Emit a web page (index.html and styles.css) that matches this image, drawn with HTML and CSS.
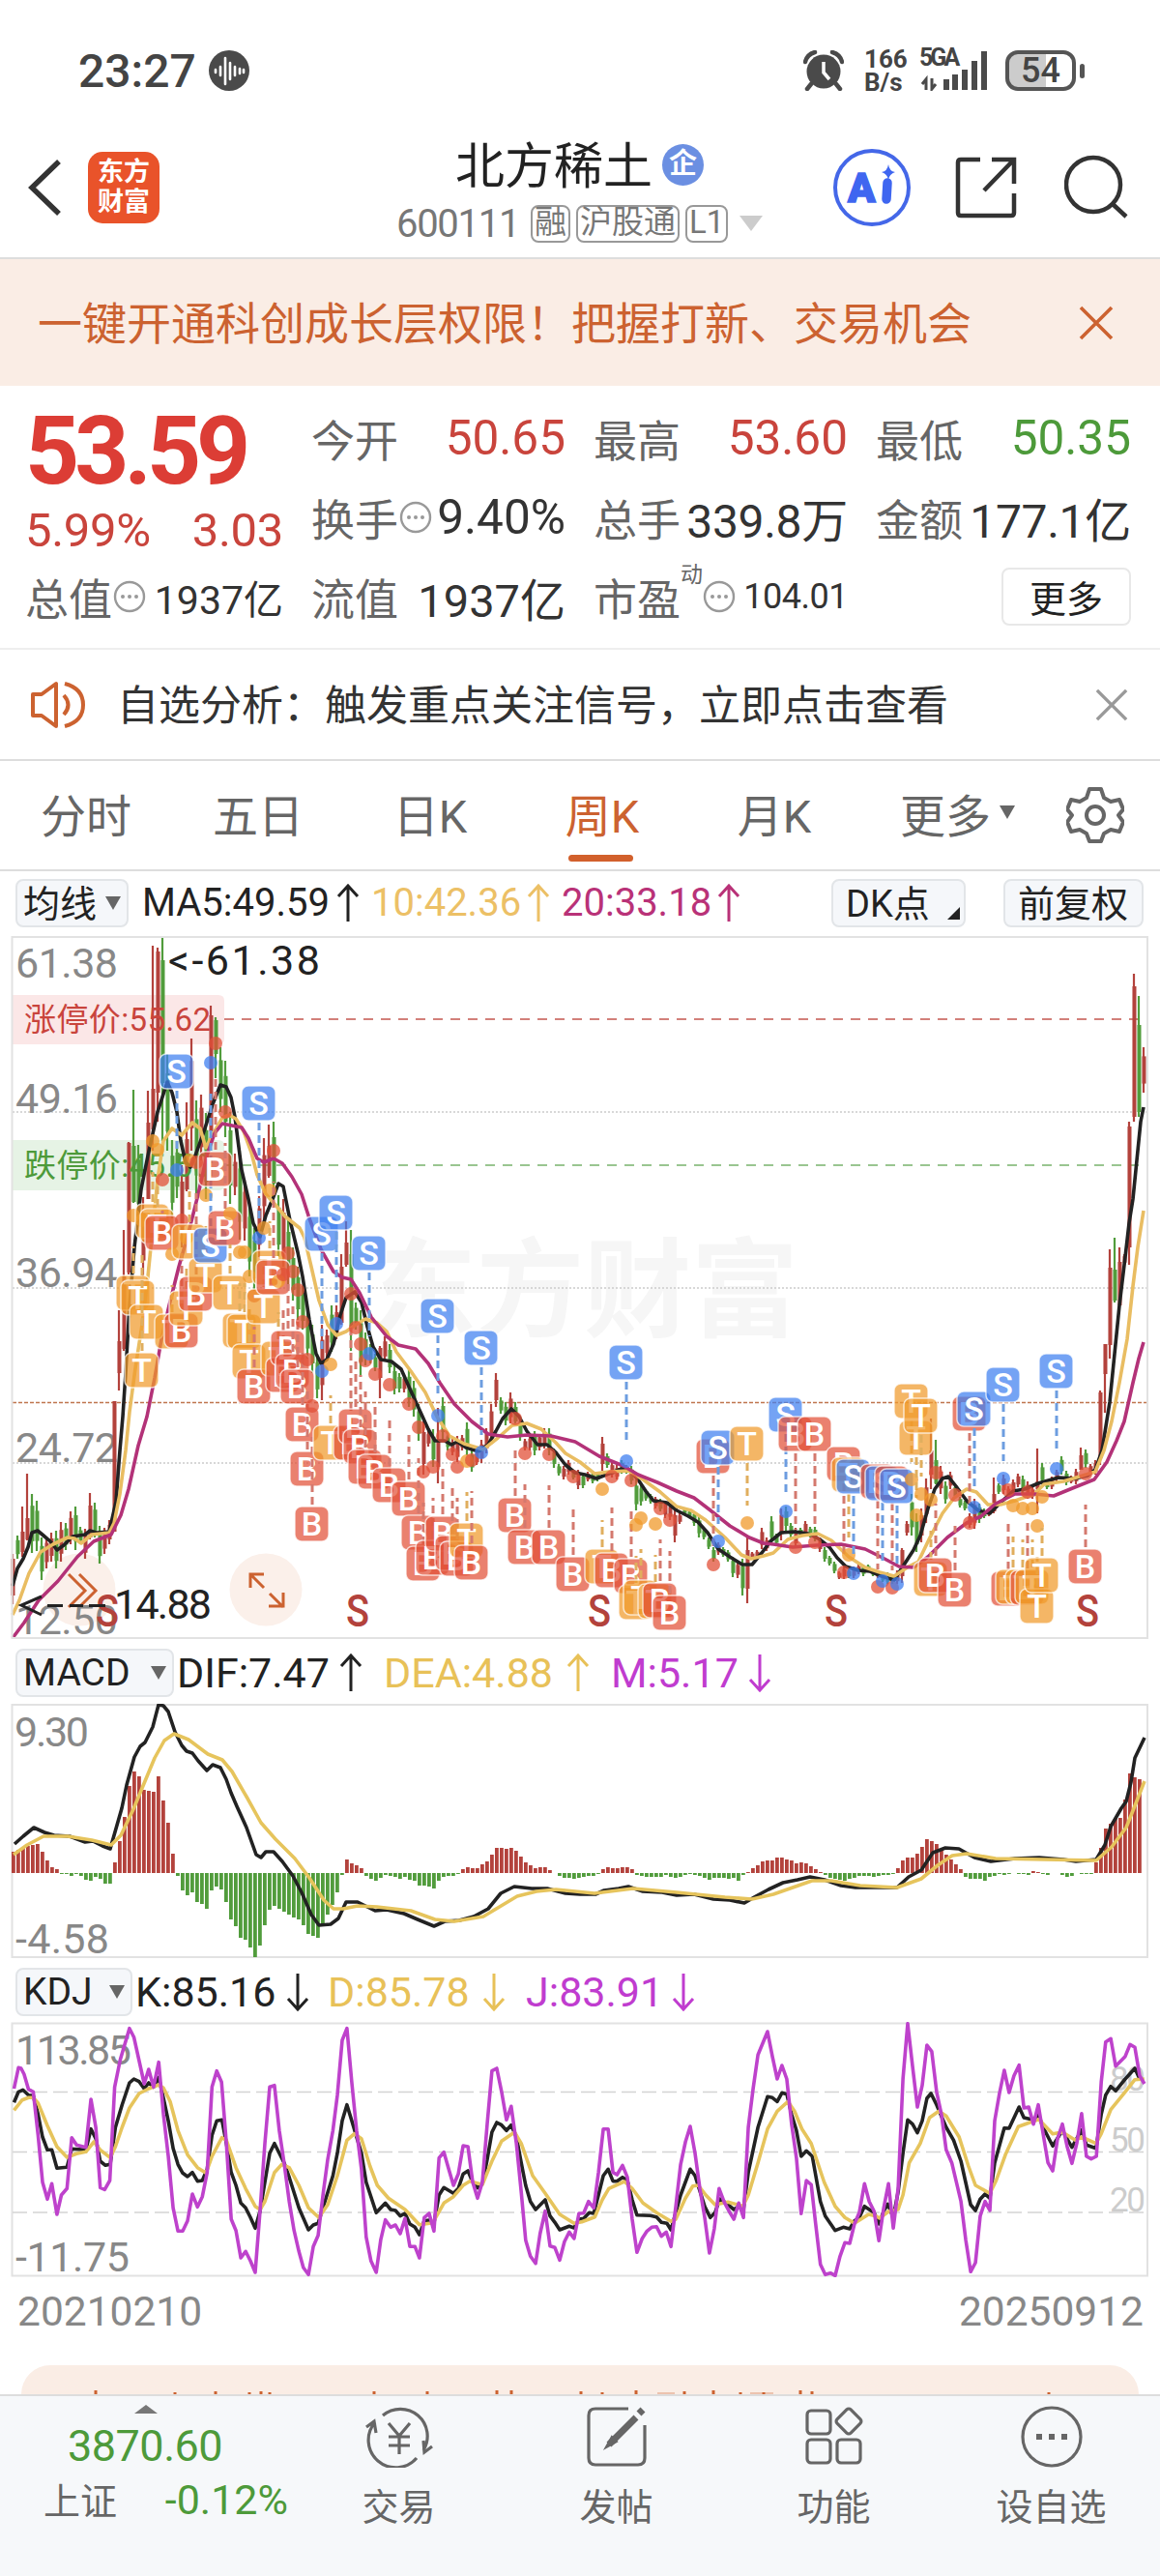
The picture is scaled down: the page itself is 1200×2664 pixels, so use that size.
FILE: index.html
```html
<!DOCTYPE html>
<html lang="zh-CN">
  <head>
    <meta charset="UTF-8" />
    <meta name="viewport" content="width=device-width, initial-scale=1.0" />
    <title>北方稀土 600111</title>
    <link rel="stylesheet" href="styles.css">
  </head>
  <body>
    <svg class="defs" width="0" height="0">
      <symbol id="arrow" viewBox="0 0 24 40">
        <path d="M12 39V2M2 13L12 2l10 11" fill="none" stroke="currentColor" stroke-width="3" />
      </symbol>
      <symbol id="dots" viewBox="0 0 34 34">
        <circle cx="17" cy="17" r="15" fill="none" stroke="#999" stroke-width="2.4" />
        <circle cx="10" cy="17" r="2" fill="#999" /><circle cx="17" cy="17" r="2" fill="#999" /><circle cx="24" cy="17" r="2" fill="#999" />
      </symbol>
      <symbol id="cross" viewBox="0 0 36 36">
        <path d="M2 2L34 34M34 2L2 34" fill="none" stroke="currentColor" stroke-width="3.600" />
      </symbol>
    </svg>

    <div class="status">
      <span class="clock">23:27</span>
      <svg class="voice" width="42" height="42" viewBox="0 0 42 42">
        <circle cx="21" cy="21" r="21" fill="#4a4a4a" />
        <path d="M7 20v3M12 17v9M17 8v27M22 13v17M27 17v9M32 19v5M36 20v3" stroke="#fff" stroke-width="2.6" stroke-linecap="round" />
      </svg>
      <svg class="alarm" width="42" height="42" viewBox="0 0 42 42">
        <circle cx="21" cy="22" r="17.500" fill="#4a4a4a" />
        <path d="M2 12Q4 4 12 2M40 12Q38 4 30 2M8 35l-4 5M34 35l4 5" fill="none" stroke="#4a4a4a" stroke-width="4.500" stroke-linecap="round" />
        <path d="M21 12v11l6 7" fill="none" stroke="#fff" stroke-width="3.500" />
      </svg>
      <div class="speed"><b>166</b><b>B/s</b></div>
      <div class="signal">
        <b>5GA</b>
        <svg width="70" height="42" viewBox="0 0 70 42">
          <path d="M5 41V30l-4 5M11 29v11l4-5" fill="none" stroke="#4a4a4a" stroke-width="3" />
          <path d="M26 41V30M35 41V25M45 41V20M55 41V11M65 41V1" stroke="#4a4a4a" stroke-width="6" />
        </svg>
      </div>
      <div class="battery"><span>54</span></div>
    </div>

    <header class="header">
      <svg class="back" width="36" height="60" viewBox="0 0 36 60"><path d="M32 3L4 30l28 27" fill="none" stroke="#333" stroke-width="5.500" /></svg>
      <div class="logo"><span>东方</span><span>财富</span></div>
      <div class="title">
        <div class="name">北方稀土<i>企</i></div>
        <div class="code">600111<em class="first">融</em><em>沪股通</em><em>L1</em><u></u></div>
      </div>
      <svg class="ai" width="80" height="80" viewBox="0 0 80 80">
        <circle cx="40" cy="40" r="38" fill="#fff" stroke="#4467e8" stroke-width="4" />
        <text x="15" y="55" font-size="42" font-weight="900" fill="#3f66f0" stroke="#3f66f0" stroke-width="1.500">A</text>
        <path d="M56 35l-1 17" stroke="#3f66f0" stroke-width="9.500" stroke-linecap="round" />
        <path d="M57 16q1 7 7 8-6 2-7 8-1-6-7-8 6-1 7-8z" fill="#3f66f0" />
      </svg>
      <svg class="share" width="64" height="64" viewBox="0 0 64 64">
        <path d="M26 3H6Q3 3 3 6v52q0 3 3 3h52q3 0 3-3V38M38 3h23v25M61 3L30 35" fill="none" stroke="#333" stroke-width="4.500" />
      </svg>
      <svg class="search" width="66" height="66" viewBox="0 0 66 66">
        <circle cx="30" cy="31" r="28" fill="none" stroke="#333" stroke-width="4.500" /><path d="M50 51l14 13" stroke="#333" stroke-width="4.500" />
      </svg>
    </header>

    <div class="banner">
      <span>一键开通科创成长层权限！把握打新、交易机会</span>
      <svg width="36" height="36"><use href="#cross" /></svg>
    </div>

    <section class="quote">
      <div class="last">
        <div class="price">53.59</div>
        <div class="change"><span>5.99%</span><span>3.03</span></div>
      </div>
      <div class="cell"><label>今开</label><span class="up">50.65</span></div>
      <div class="cell"><label>最高</label><span class="up">53.60</span></div>
      <div class="cell"><label>最低</label><span class="down">50.35</span></div>
      <div class="cell"><label>换手<svg width="34" height="34"><use href="#dots" /></svg></label><span>9.40%</span></div>
      <div class="cell"><label>总手</label><span class="tight">339.8万</span></div>
      <div class="cell"><label>金额</label><span class="tight">177.1亿</span></div>
      <div class="cell"><label>总值<svg width="34" height="34"><use href="#dots" /></svg></label><span class="mid">1937亿</span></div>
      <div class="cell"><label>流值</label><span class="wide">1937亿</span></div>
      <div class="cell"><label>市盈<sup>动</sup><svg width="34" height="34"><use href="#dots" /></svg></label><span class="small">104.01</span></div>
      <div class="cell end"><button class="more">更多</button></div>
    </section>

    <div class="notice">
      <svg width="58" height="50" viewBox="0 0 58 50">
        <path d="M3 14h9L27 3v44L12 36H3z" fill="none" stroke="#cc6230" stroke-width="4" stroke-linejoin="round" />
        <path d="M35 15q9 10 0 20M36 3q19 5 19 22T36 47" fill="none" stroke="#cc6230" stroke-width="4" />
      </svg>
      <span>自选分析：触发重点关注信号，立即点击查看</span>
      <svg class="dismiss" width="34" height="34"><use href="#cross" /></svg>
    </div>

    <nav class="tabs">
      <a>分时</a>
      <a>五日</a>
      <a>日K</a>
      <a class="active">周K</a>
      <a>月K</a>
      <a class="all">更多<u></u></a>
      <svg width="60" height="60" viewBox="0 0 60 60">
        <path d="M24 3h12l3 9 7 4 9-2 4 10-5 6 5 7-4 10-9-2-7 4-3 8H24l-3-8-7-4-9 2-4-10 5-7-5-6 4-10 9 2 7-4z" fill="none" stroke="#666" stroke-width="4" stroke-linejoin="round" />
        <circle cx="30" cy="30" r="9" fill="none" stroke="#666" stroke-width="4" />
      </svg>
    </nav>

    <div class="legend ma">
      <button>均线<u></u></button>
      <span class="black">MA5:49.59<svg><use href="#arrow" /></svg></span>
      <span class="yellow">10:42.36<svg><use href="#arrow" /></svg></span>
      <span class="magenta">20:33.18<svg><use href="#arrow" /></svg></span>
      <button class="dk">DK点<s></s></button>
      <button class="fq">前复权</button>
    </div>
    <svg id="kline" width="1200" height="736" viewBox="0 964 1200 736"></svg>

    <div class="legend macd">
      <button>MACD<u></u></button>
      <span class="black">DIF:7.47<svg><use href="#arrow" /></svg></span>
      <span class="yellow">DEA:4.88<svg><use href="#arrow" /></svg></span>
      <span class="purple">M:5.17<svg class="flip"><use href="#arrow" /></svg></span>
    </div>
    <svg id="macd" width="1200" height="266" viewBox="0 1762 1200 266"></svg>

    <div class="legend kdj">
      <button>KDJ<u></u></button>
      <span class="black">K:85.16<svg class="flip"><use href="#arrow" /></svg></span>
      <span class="yellow">D:85.78<svg class="flip"><use href="#arrow" /></svg></span>
      <span class="purple">J:83.91<svg class="flip"><use href="#arrow" /></svg></span>
    </div>
    <svg id="kdj" width="1200" height="264" viewBox="0 2091 1200 264"></svg>

    <div class="dates"><span>20210210</span><span>20250912</span></div>
    <div class="card">
      <svg width="1156" height="30" viewBox="22 2446 1156 30">
        <path d="M99 2472v4M181 2474v2M223 2473v3M258 2474v2M270 2473v3M279 2474v2M387 2473v3M442 2473v3M514 2472v4M529 2472v4M601 2473v3M623 2474v2M658 2472v4M708 2473v3M738 2472v4M766 2474v2M790 2474v2M828 2472v4M840 2473v3M1085 2474v2" stroke="#cc6230" stroke-width="3" />
        <path d="M680 2475h18M776 2475h24" stroke="#cc6230" stroke-width="1.500" opacity=".4" />
      </svg>
    </div>

    <footer class="bottom">
      <div class="index">
        <u></u>
        <div class="value">3870.60</div>
        <div class="row"><span>上证</span><b>-0.12%</b></div>
      </div>
      <a>
        <svg width="72" height="64" viewBox="0 0 72 64">
          <path d="M19 10A28 28 0 0 1 61 46M54 54A28 28 0 0 1 11 17M2 22l8-6 2 12M70 42l-8 6-1-12" fill="none" stroke="#666" stroke-width="3.200" />
          <path d="M25 18l11 13 11-13M36 31v19M25 32h22M25 41h22" fill="none" stroke="#666" stroke-width="3.200" />
        </svg>交易
      </a>
      <a>
        <svg width="64" height="64" viewBox="0 0 64 64">
          <path d="M44 3H10Q3 3 3 10v44q0 7 7 7h44q7 0 7-7V20" fill="none" stroke="#666" stroke-width="3.200" />
          <path d="M55 8l4-4M52 12L24 40" stroke="#666" stroke-width="7" /><path d="M27 33l-5 9 9-5z" fill="#666" />
        </svg>发帖
      </a>
      <a>
        <svg width="64" height="64" viewBox="0 0 64 64">
          <rect x="4" y="5" width="24" height="24" rx="4" /><rect x="4" y="35" width="24" height="24" rx="4" /><rect x="35" y="35" width="24" height="24" rx="4" />
          <rect x="37" y="6" width="20" height="20" rx="3" transform="rotate(45 47 16)" />
        </svg>功能
      </a>
      <a>
        <svg width="64" height="64" viewBox="0 0 64 64">
          <circle cx="32" cy="32" r="30" /><path d="M19 29v6M32 29v6M45 29v6" stroke-width="6" />
        </svg>设自选
      </a>
    </footer>

    <script src="chart.js"></script>
  </body>
</html>
```

FILE: styles.css
```css
* {
  margin: 0;
  padding: 0;
  box-sizing: border-box;
}

body {
  width: 1200px;
  height: 2664px;
  overflow: hidden;
  background: #fff;
  color: #333;
  font-family: Roboto, "Noto Sans CJK SC", sans-serif;
  display: flex;
  flex-direction: column;
}

body > * {
  flex-shrink: 0;
}

svg {
  display: block;
  flex-shrink: 0;
}

.defs {
  position: absolute;
}

button {
  font-family: inherit;
  color: #222;
}

i,
em {
  font-style: normal;
}

u {
  display: block;
  text-decoration: none;
  border: 8px solid transparent;
  border-top: 14px solid #666;
  border-bottom: 0;
}

/* status bar */
.status {
  height: 130px;
  padding: 16px 87px 0 81px;
  display: flex;
  align-items: center;
  color: #444;
}

.clock {
  width: 135px;
  font-size: 48px;
  font-weight: 500;
}

.alarm {
  margin-left: auto;
}

.speed {
  width: 44px;
  margin-left: 21px;
  font-size: 26px;
  line-height: 24px;
}

.speed b {
  display: block;
  font-weight: 700;
}

.signal {
  position: relative;
  width: 70px;
  margin-left: 15px;
}

.signal b {
  position: absolute;
  left: -2px;
  top: -6px;
  font-size: 25px;
  line-height: 28px;
  letter-spacing: -3px;
}

.battery {
  position: relative;
  width: 73px;
  height: 42px;
  margin-left: 17px;
  border: 4px solid #555;
  border-radius: 13px;
  background: linear-gradient(90deg, #ccc 58%, #fff 58%);
  text-align: center;
  font-size: 36px;
  font-weight: 500;
  line-height: 35px;
}

.battery::after {
  content: "";
  position: absolute;
  right: -13px;
  top: 10px;
  width: 5px;
  height: 15px;
  border-radius: 3px;
  background: #555;
}

/* header */
.header {
  height: 138px;
  padding: 0 33px 0 29px;
  display: flex;
  align-items: flex-start;
  border-bottom: 2px solid #ddd;
}

.back {
  margin-top: 34px;
}

.logo {
  width: 74px;
  height: 74px;
  margin: 27px 0 0 26px;
  padding-top: 6px;
  border-radius: 15px;
  background: #e9532a;
  color: #fff;
  font-size: 27px;
  font-weight: 700;
  line-height: 31px;
  text-align: center;
}

.logo span {
  display: block;
}

.title {
  width: 390px;
  margin-left: 245px;
}

.name {
  display: flex;
  align-items: center;
  height: 80px;
  padding: 0 0 4px 61px;
  font-size: 51px;
  color: #222;
}

.name i {
  width: 43px;
  height: 43px;
  margin: 4px 0 0 10px;
  border-radius: 50%;
  background: #6b8fe2;
  color: #fff;
  font-size: 29px;
  font-weight: 700;
  line-height: 40px;
  text-align: center;
}

.code {
  display: flex;
  align-items: center;
  height: 42px;
  font-size: 40px;
  letter-spacing: -1.3px;
  color: #777;
  white-space: nowrap;
}

.code em {
  height: 39px;
  margin-left: 6px;
  padding: 0 2px;
  border: 2px solid #999;
  border-radius: 8px;
  font-size: 33px;
  line-height: 32px;
  letter-spacing: 0;
}

.code .first {
  margin-left: 12px;
}

.code u {
  margin-left: 12px;
  border-width: 16px 12px 0;
  border-top-color: #ccc;
}

.ai {
  margin: 24px 0 0 62px;
}

.share {
  margin: 32px 0 0 46px;
}

.search {
  margin: 30px 0 0 auto;
}

.banner {
  height: 131px;
  padding: 0 48px 0 39px;
  display: flex;
  justify-content: space-between;
  align-items: center;
  background: #faede5;
  color: #cc6230;
  font-size: 46px;
}

.banner span {
  padding-bottom: 5px;
}

/* quote */
.quote {
  height: 273px;
  padding: 14px 27px 0 26px;
  display: grid;
  grid-template-columns: 267px 263px 263px 264px;
  grid-template-rows: 82px 82px 82px;
  column-gap: 29px;
  border-bottom: 2px solid #eee;
}

.last {
  grid-row: span 2;
  color: #c9443c;
}

.price {
  height: 100px;
  font-size: 98px;
  font-weight: 700;
  line-height: 108px;
  letter-spacing: -5px;
  color: #dc3d35;
}

.change {
  display: flex;
  justify-content: space-between;
  font-size: 49px;
  line-height: 72px;
  letter-spacing: -0.300px;
}

.cell {
  display: flex;
  justify-content: space-between;
  align-items: center;
  height: 80px;
  font-size: 49.500px;
  white-space: nowrap;
}

.cell label {
  display: flex;
  align-items: center;
  color: #666;
  font-size: 45px;
  letter-spacing: 0;
}

.cell label svg {
  margin-left: 1px;
}

.cell sup {
  width: 22px;
  align-self: flex-start;
  font-size: 23px;
  line-height: 20px;
}

.cell .tight {
  font-size: 48px;
  letter-spacing: -0.300px;
}

.cell .mid {
  font-size: 41px;
}

.cell .wide {
  font-size: 47px;
}

.cell .small {
  font-size: 36px;
  letter-spacing: -0.500px;
}

.cell.end {
  justify-content: flex-end;
}

.up {
  color: #c9443c;
}

.down {
  color: #4d9a3a;
}

.more {
  width: 134px;
  height: 60px;
  padding-bottom: 5px;
  border: 2px solid #e8e8e8;
  border-radius: 8px;
  background: #fff;
  font-size: 38px;
}

.notice {
  height: 115px;
  padding: 0 33px 0 31px;
  display: flex;
  align-items: center;
  border-bottom: 2px solid #ddd;
  font-size: 43px;
}

.notice span {
  margin-left: 32px;
  padding-bottom: 6px;
}

.dismiss {
  margin-left: auto;
  color: #999;
}

/* tabs */
.tabs {
  height: 114px;
  display: flex;
  align-items: center;
  border-bottom: 2px solid #ddd;
  font-size: 47px;
  color: #666;
}

.tabs a {
  position: relative;
  width: 178px;
  padding-bottom: 6px;
  display: flex;
  justify-content: center;
  align-items: center;
}

.tabs .all {
  width: 201px;
}

.tabs u {
  margin-left: 9px;
}

.tabs svg {
  margin-left: 12px;
}

.tabs .active {
  color: #cc6230;
}

.tabs .active::after {
  content: "";
  position: absolute;
  left: 54px;
  bottom: -10px;
  width: 67px;
  height: 7px;
  border-radius: 4px;
  background: #d2602c;
}

/* indicator rows */
.legend {
  padding-left: 16px;
  display: flex;
  align-items: flex-start;
  font-size: 40px;
  line-height: 50px;
}

.legend.ma {
  height: 63px;
  padding-top: 8px;
}

.legend.macd {
  height: 62px;
  padding-top: 5px;
}

.legend.kdj {
  height: 63px;
  padding-top: 7px;
}

.legend button {
  display: flex;
  align-items: center;
  height: 50px;
  padding: 0 6px;
  border: 2px solid #e2e5e8;
  border-radius: 8px;
  background: #f5f7fa;
  font-size: 39px;
}

.legend button u {
  margin-left: auto;
}

.legend.ma button {
  padding-bottom: 5px;
  font-size: 38px;
}

.ma button u {
  margin-top: 5px;
}

.ma button:first-child {
  width: 117px;
}

.macd button {
  width: 164px;
}

.kdj button {
  width: 121px;
}

.legend span {
  display: flex;
  align-items: center;
  justify-content: space-between;
}

.legend span svg {
  width: 24px;
  height: 40px;
}

.ma .black {
  width: 225px;
  margin-left: 14px;
}

.ma .yellow {
  width: 185px;
  margin-left: 12px;
}

.ma .magenta {
  width: 185px;
  margin-left: 12px;
}

.legend .dk {
  position: relative;
  width: 139px;
  margin-left: 94px;
  padding-left: 13px;
}

.legend .fq {
  width: 145px;
  margin-left: 39px;
  padding-left: 13px;
}

.dk s {
  position: absolute;
  right: 4px;
  bottom: 6px;
  border-bottom: 13px solid #222;
  border-left: 13px solid transparent;
}

.macd span,
.kdj span {
  font-size: 43px;
}

.macd .black {
  width: 192px;
  margin-left: 3px;
}

.macd .yellow {
  width: 213px;
  margin-left: 22px;
}

.macd .purple {
  width: 166px;
  margin-left: 22px;
}

.kdj .black {
  width: 180px;
  margin-left: 3px;
}

.kdj .yellow {
  width: 184px;
  margin-left: 19px;
}

.kdj .purple {
  width: 175px;
  margin-left: 21px;
}

.legend .flip {
  transform: rotate(180deg);
}

.black {
  color: #222;
}

.yellow {
  color: #e8c158;
}

.ma .yellow {
  color: #ecc066;
}

.magenta {
  color: #b93278;
}

.purple {
  color: #c03ccf;
}

.dates {
  height: 91px;
  padding: 9px 17px 0 18px;
  display: flex;
  justify-content: space-between;
  font-size: 42.500px;
  line-height: 54px;
  color: #888;
}

.card {
  height: 30px;
  margin: 0 22px;
  border-radius: 50px 50px 0 0;
  background: #faede5;
  overflow: hidden;
}

/* bottom bar */
.bottom {
  height: 188px;
  display: flex;
  border-top: 2px solid #ddd;
  background: #f6f8fa;
  color: #666;
  font-size: 38px;
}

.bottom a {
  width: 225px;
  padding-top: 10px;
  display: flex;
  flex-direction: column;
  align-items: center;
  gap: 10px;
}

.bottom a svg {
  fill: none;
  stroke: #666;
  stroke-width: 3.200;
}

.index {
  width: 300px;
  padding-top: 9px;
}

.index u {
  width: 24px;
  margin-left: 139px;
  border-width: 0 12px 9px;
  border-style: solid;
  border-color: transparent transparent #777;
}

.value {
  margin: 9px 0 0 70px;
  font-size: 45px;
  line-height: 50px;
  letter-spacing: -0.500px;
  color: #4d9a3a;
}

.row {
  padding: 1px 2px 0 45px;
  display: flex;
  justify-content: space-between;
  align-items: center;
}

.row b {
  padding-top: 3px;
  font-size: 43px;
  font-weight: 400;
  color: #4d9a3a;
}

/* charts */
#kline,
#macd,
#kdj {
  overflow: hidden;
}

.frame {
  fill: none;
  stroke: #e2e2e2;
  stroke-width: 2;
}

.axis {
  fill: #888;
  font-size: 43px;
}

.line {
  fill: none;
  stroke-width: 3.600;
  stroke-linejoin: round;
}

.badge rect {
  stroke: #fff;
  stroke-opacity: 0.7;
  stroke-width: 1.500;
}

.badge text {
  fill: #fff;
  font-size: 34px;
  font-weight: 500;
  text-anchor: middle;
}
```

FILE: chart.js
```js
const RED = "#b3423c";
const GREEN = "#519c3c";

// one weekly bar every 5px
const barX = (i) => 13 + i * 5;

const text = (x, y, str, attrs) => `<text x="${x}" y="${y}" ${attrs}>${str}</text>`;
const line = (pts, color) => `<polyline class="line" points="${pts}" stroke="${color}" />`;

// colour, high, low, body top, body bottom
const candles = `r1607-1659-1612-1650 g1588-1612 r1558-1610-1584-1605 r1524-1593-1570-1592 g1545-1606 g1552-1604 g1590-1634 r1589-1622 r1585-1615 g1583-1622
r1574-1615 g1575-1603 r1563-1597 g1558-1603 g1579-1597 r1581-1612 r1544-1592-1557-1590 g1554-1590 g1578-1617 r1580-1607
r1572-1597 r1449-1584-1449-1584 r1355-1438-1387-1420 r1272-1397-1320-1395 r1181-1318-1182-1316 g1127-1244-1185-1243 g1184-1260 r1238-1320 r1128-1240-1161-1240 r978-1190-1126-1168
r980-1160-984-1130 g969-1180-993-1120 g1090-1190 g1179-1260 g1180-1239 r1205-1290 r1140-1232-1178-1230 r1074-1190 g1138-1235 r1132-1200
g1151-1240 r1040-1190-1050-1170 g1052-1115-1055-1090 g1083-1150 g1097-1176 g1150-1245 r1193-1236 g1190-1282 r1220-1283 g1243-1320
g1270-1335 r1237-1300 r1177-1265 r1163-1218-1185-1216 g1160-1240 g1236-1300 r1240-1310 g1260-1330 g1290-1345 g1310-1365
g1330-1375 g1353-1405 g1370-1420 g1400-1446 r1370-1448 r1375-1405 g1350-1398 r1350-1385 r1297-1370-1310-1368 r1263-1310-1285-1308
g1272-1397 g1347-1375 g1355-1422 g1378-1412 g1390-1410 g1400-1418 r1392-1446-1394-1425 r1382-1408 g1390-1420 g1412-1442
g1420-1440 r1422-1440 g1416-1455 g1428-1465 g1452-1490 r1470-1525 r1480-1496 g1478-1517 r1456-1534-1490-1517 g1445-1490
g1482-1500 r1488-1505 r1485-1512 r1484-1500 g1471-1505 g1500-1522 r1500-1515 r1489-1513 r1477-1503 r1452-1490
r1420-1455 g1445-1462 g1450-1474 r1440-1472 g1450-1475 g1465-1490 r1488-1500 r1485-1500 g1480-1505 r1483-1500
r1477-1498 g1477-1505 g1498-1518 g1514-1526 r1516-1530 r1510-1525 g1520-1530 r1520-1540 g1524-1539 r1522-1532
g1522-1534 g1522-1532 r1486-1521 g1503-1518 r1512-1528 r1515-1530 g1510-1524 g1515-1524 g1516-1535 g1530-1562
g1535-1557 g1540-1552 g1545-1555 r1548-1560 g1550-1563 r1552-1570 r1555-1572 r1560-1595 r1565-1576 g1560-1566
g1562-1570 g1563-1578 g1568-1590 g1580-1592 g1590-1602 g1600-1615 r1595-1608 g1600-1610 g1603-1615 g1610-1631
r1615-1632 g1612-1650 r1590-1658-1603-1643 r1605-1613 r1603-1612 r1580-1602 r1590-1604 g1568-1595 g1586-1598 r1560-1593
g1558-1583 g1575-1590 r1580-1600 g1580-1590 r1573-1588 g1579-1590 g1579-1594 r1590-1605 g1600-1615 g1609-1619
g1615-1627 r1625-1633 r1620-1633 g1623-1632 r1620-1632 r1618-1628 g1618-1630 g1618-1626 g1622-1630 r1624-1632
g1628-1636 g1626-1638 g1628-1638 r1624-1638 r1601-1637-1603-1630 r1573-1588 g1545-1588 g1565-1605 r1560-1595 r1529-1575
r1467-1540-1500-1525 g1489-1535-1510-1534 r1516-1545 g1532-1555 r1522-1540 g1535-1550 g1548-1559 g1552-1562 r1565-1580 r1550-1581
g1555-1575 g1560-1570 r1560-1568 r1528-1565-1545-1563 g1534-1545 r1525-1545 r1537-1550 r1530-1545 r1524-1538 g1526-1545
r1532-1550 r1538-1550 r1498-1565-1532-1540 g1513-1535 g1530-1540 r1527-1540 r1520-1532 g1506-1525 g1521-1536 r1526-1534
r1519-1535 r1497-1520-1505-1520 g1499-1518 r1514-1525 r1510-1525 r1438-1515-1440-1508 r1390-1461-1390-1421 r1292-1405-1311-1391 g1280-1347-1313-1345 r1290-1352-1305-1350
r1297-1308 r1160-1308-1165-1290 r1007-1160-1020-1155 g1030-1155-1060-1150 r1083-1130`.split(/\s+/);

const ma5 = "13,1640 18,1622 24,1612 29,1600 33,1585 39,1583 45,1588 52,1594 59,1603 66,1598 75,1589 88,1587 93,1583 100,1585 113,1584 120,1553 124,1500 127,1465 130,1420 134,1350 139,1290 146,1230 153,1195 163,1150 173,1119 178,1130 183,1150 187,1180 192,1202 197,1207 202,1195 210,1173 220,1142 228,1122 234,1124 239,1135 243,1155 250,1210 257,1240 262,1265 269,1279 275,1257 282,1240 288,1224 293,1227 300,1262 308,1295 313,1320 320,1365 327,1400 332,1410 338,1406 345,1390 352,1360 358,1342 367,1336 374,1347 380,1372 386,1393 394,1406 405,1408 415,1416 423,1434 433,1456 443,1478 450,1490 460,1490 467,1494 473,1491 482,1497 495,1501 505,1494 513,1480 520,1467 529,1457 537,1465 545,1480 556,1494 566,1494 575,1502 585,1515 595,1523 605,1525 617,1529 630,1524 643,1519 652,1521 660,1530 668,1542 676,1552 690,1554 700,1562 712,1568 722,1574 732,1585 743,1602 755,1610 768,1618 778,1618 788,1606 797,1594 808,1585 822,1584 836,1586 848,1592 858,1600 866,1611 875,1620 888,1624 900,1625 912,1630 925,1634 934,1620 945,1603 952,1588 960,1560 967,1540 975,1529 981,1527 989,1537 1000,1552 1012,1562 1024,1565 1034,1555 1048,1542 1060,1540 1074,1534 1095,1528 1112,1529 1125,1526 1133,1520 1140,1500 1148,1450 1153,1400 1158,1350 1164,1300 1168,1265 1172,1240 1176,1200 1180,1160 1183,1145";
const ma10 = "13,1670 20,1655 30,1627 42,1605 55,1597 70,1590 77,1591 84,1596 95,1587 113,1585 118,1575 124,1545 130,1500 134,1460 140,1415 147,1370 153,1320 158,1270 163,1220 169,1180 178,1167 188,1174 199,1161 207,1167 213,1187 219,1175 230,1156 237,1153 244,1157 252,1170 260,1192 266,1215 275,1235 284,1245 295,1258 310,1270 315,1280 322,1310 330,1345 339,1370 348,1381 358,1377 368,1370 378,1364 390,1368 400,1377 410,1398 425,1418 440,1440 452,1465 465,1485 480,1493 500,1499 515,1487 530,1474 545,1472 560,1478 575,1492 585,1503 600,1512 615,1524 630,1522 650,1521 665,1530 683,1543 700,1558 715,1562 730,1572 750,1590 767,1608 777,1612 790,1609 800,1606 815,1592 830,1588 846,1586 860,1593 878,1610 895,1621 910,1626 925,1630 940,1620 950,1615 962,1590 975,1565 987,1549 1000,1540 1010,1543 1022,1556 1035,1556 1050,1552 1070,1545 1080,1535 1100,1532 1120,1526 1133,1522 1142,1500 1150,1470 1158,1430 1166,1385 1172,1330 1177,1290 1183,1252";
const ma20 = "13,1694 25,1678 40,1655 60,1635 80,1610 97,1594 115,1587 125,1567 133,1540 143,1495 152,1465 160,1425 167,1385 175,1350 185,1310 195,1275 205,1235 214,1195 222,1172 230,1162 240,1164 250,1166 257,1177 266,1198 273,1202 283,1198 292,1203 302,1217 312,1235 320,1260 332,1292 345,1315 354,1321 363,1323 372,1337 384,1362 400,1382 412,1391 430,1395 443,1410 455,1430 470,1452 488,1470 505,1483 525,1486 545,1484 570,1485 595,1491 620,1506 645,1516 660,1525 680,1533 700,1542 718,1549 735,1562 755,1578 775,1590 790,1596 800,1597 820,1600 845,1598 870,1597 895,1602 915,1612 930,1620 945,1621 960,1610 980,1590 1000,1575 1015,1568 1030,1555 1050,1545 1070,1545 1090,1547 1112,1538 1132,1530 1145,1512 1155,1490 1163,1470 1172,1430 1178,1405 1183,1388";

// type, badge x, badge y, dot y
const marks = [
  ["T", 138, 1337, 1257], ["T", 143, 1342, 0], ["T", 152, 1367, 0], ["T", 147, 1417, 1262],
  ["T", 158, 1263, 1180], ["T", 163, 1268, 1189], ["B", 168, 1275, 1220],
  ["T", 178, 1377, 1297], ["B", 188, 1376, 1262], ["T", 193, 1353, 1280], ["T", 196, 1284, 1200], ["B", 203, 1338, 1202],
  ["T", 213, 1319, 1236], ["S", 218, 1288, 1099], ["B", 223, 1209, 1079], ["B", 233, 1270, 1150], ["S", 183, 1108, 1210],
  ["T", 238, 1337, 1255], ["T", 248, 1376, 1295], ["T", 253, 1377, 1295], ["T", 258, 1408, 1320], ["B", 263, 1434, 1340],
  ["S", 268, 1141, 1280], ["T", 273, 1351, 1270], ["T", 279, 1311, 1231], ["B", 283, 1321, 1190], ["T", 288, 1405, 1325],
  ["B", 293, 1422, 1318], ["B", 298, 1394, 1296], ["B", 303, 1418, 1315], ["B", 308, 1434, 1334], ["B", 313, 1473, 1367],
  ["B", 318, 1519, 1406], ["B", 323, 1576, 1454], ["S", 333, 1276, 1418], ["T", 342, 1492, 1411], ["S", 348, 1254, 1369],
  ["B", 363, 1492, 1338], ["B", 368, 1475, 1373], ["B", 373, 1496, 1390], ["B", 378, 1517, 1407], ["B", 388, 1522, 1421],
  ["S", 382, 1296, 1400], ["B", 403, 1536, 1432], ["B", 423, 1550, 1452], ["B", 433, 1585, 1476], ["B", 438, 1617, 1522],
  ["B", 448, 1611, 1517], ["S", 453, 1361, 1464], ["B", 458, 1586, 1485], ["B", 468, 1606, 1504], ["B", 473, 1612, 1517],
  ["T", 483, 1593, 1511], ["B", 488, 1616, 1510], ["S", 498, 1394, 1502], ["B", 533, 1567, 1467], ["B", 543, 1600, 1503],
  ["B", 568, 1600, 1504], ["B", 593, 1628, 1527], ["T", 623, 1620, 1540], ["B", 633, 1624, 1527], ["B", 653, 1630, 1531],
  ["S", 648, 1409, 1511], ["T", 658, 1657, 1577], ["T", 663, 1652, 1570], ["T", 678, 1656, 1576], ["B", 683, 1655, 1560],
  ["B", 693, 1668, 1572], ["B", 738, 1506, 1618], ["S", 743, 1497, 1594], ["T", 773, 1493, 1575], ["S", 813, 1463, 1563],
  ["B", 823, 1483, 1600], ["B", 843, 1483, 1595], ["B", 873, 1514, 1626], ["T", 878, 1525, 1608], ["S", 883, 1527, 1627],
  ["B", 908, 1532, 1641], ["S", 913, 1534, 1635], ["B", 923, 1534, 1642], ["S", 928, 1537, 1638], ["T", 943, 1449, 1530],
  ["T", 948, 1487, 1567], ["T", 953, 1464, 1545], ["T", 963, 1633, 1551], ["B", 968, 1629, 1523], ["B", 988, 1644, 1546],
  ["B", 1003, 1462, 1575], ["S", 1008, 1457, 1559], ["S", 1038, 1432, 1529], ["B", 1043, 1643, 1541], ["T", 1048, 1641, 1557],
  ["T", 1058, 1641, 1560], ["B", 1063, 1642, 1543], ["T", 1068, 1641, 1560], ["T", 1073, 1661, 1578], ["T", 1078, 1629, 1548],
  ["S", 1093, 1418, 1519], ["B", 1123, 1620, 1524]
];
const markColor = { B: "#e25038", T: "#f09a2b", S: "#3f7ff0" };
const stemColor = { B: "#d4796e", T: "#e0ae5e", S: "#6d9de0" };

function drawKline() {
  let out = "";
  out += text(382, 1374, "东方财富", 'font-size="111" font-weight="700" fill="#f6f6f6" font-family="Noto Sans CJK SC"');
  out += '<path d="M13 1150H1187M13 1332H1187M13 1513H1187" stroke="#ccc" stroke-width="1.500" stroke-dasharray="2 2" />';
  out += '<path d="M12 1029H226q6 0 6 6v39q0 6-6 6H12z" fill="#fbe7e7" /><path d="M12 1179H226q6 0 6 6v40q0 6-6 6H12z" fill="#e6f3e5" />';
  out += '<path d="M232 1054H1187" stroke="#c4574f" stroke-width="1.500" stroke-dasharray="10 8" />';
  out += '<path d="M232 1205H1187" stroke="#78b36c" stroke-width="1.500" stroke-dasharray="10 8" />';
  out += '<path d="M13 1450.500H1187" stroke="#c0764f" stroke-width="1.500" stroke-dasharray="4 2" />';
  out += '<circle cx="82" cy="1644" r="37.500" fill="#fbf0ea" /><circle cx="275" cy="1644" r="37.500" fill="#fbf0ea" />';
  out += '<path d="M71 1628l17 17-17 17M82 1628l17 17-17 17M259 1642v-14h14M259 1628l14 14M279 1648l14 14M293 1647v14h-15" fill="none" stroke="#cc6230" stroke-width="3" />';

  [[1011, "61.38"], [1151, "49.16"], [1331, "36.94"], [1512, "24.72"], [1690, "12.50"]].forEach(([y, v]) => {
    out += text(16, y, v, 'class="axis" textLength="106"');
  });

  candles.forEach((c, i) => {
    const color = c[0] === "r" ? RED : GREEN;
    const [hi, lo, top, bottom] = c.slice(1).split("-").map(Number);
    const pad = (lo - hi) * 0.2;
    const a = top || hi + pad;
    const b = bottom || lo - pad;
    out += `<path d="M${barX(i)} ${hi}V${lo}" stroke="${color}" stroke-width="2.200" />`;
    out += `<path d="M${barX(i) + 0.5} ${a}V${b}" stroke="${color}" stroke-width="4" />`;
  });

  out += text(25, 1066, "涨停价:55.62", 'font-size="33" fill="#c9443c" textLength="193"');
  out += text(25, 1217, "跌停价:45.50", 'font-size="33" fill="#4d9a3a" textLength="193"');
  out += line(ma5, "#222") + line(ma10, "#e9bd62") + line(ma20, "#b33278");

  marks.forEach(([type, x, y, dot]) => {
    if (dot) {
      const below = y > dot;
      const from = below ? y - 20 : y + 20;
      const to = below ? dot + 32 : dot - 18;
      if ((below && from > to) || (!below && to > from)) {
        out += `<path d="M${x} ${from}V${to}" stroke="${stemColor[type]}" stroke-width="3" stroke-dasharray="8 5" />`;
      }
      out += `<circle cx="${x}" cy="${dot}" r="7" fill="${markColor[type]}" opacity=".75" />`;
    }
    out += `<g class="badge"><rect x="${x - 18}" y="${y - 18}" width="35" height="36" rx="7" fill="${markColor[type]}" fill-opacity=".72" />${text(x - 0.5, y + 12, type, "")}</g>`;
  });

  [111, 370, 620, 865, 1125].forEach((x) => {
    out += text(x, 1682, "S", `font-size="46" font-weight="500" fill="${RED}" text-anchor="middle" textLength="24" lengthAdjust="spacingAndGlyphs"`);
  });
  out += text(174, 1008, "&lt;-61.38", 'font-size="43" fill="#222" textLength="157"');
  out += '<path d="M43 1651l-21 9 21 10M49 1660.500h16M72 1660.500h14M92 1660.500h17" fill="none" stroke="#222" stroke-width="3" />';
  out += text(118, 1674, "14.88", 'font-size="43" fill="#222" textLength="101"');
  out += '<rect class="frame" x="12.500" y="969" width="1174.500" height="725" />';
  document.getElementById("kline").innerHTML = out;
}

const macdBars = [
  22, 24, 27, 28, 29, 30, 22, 13, 6, 4, -1, -1, -3, -1, -3, -7, -8, -4, -6, -11, -11, 11, 33, 58, 90, 105, 100, 86, 85, 84, 100, 75, 52, 20,
  -3, -18, -23, -20, -30, -32, -37, -18, -14, -17, -30, -48, -55, -67, -69, -77, -87, -75, -54, -38, -34, -37, -40, -43, -46, -48, -54, -63, -65, -67, -55, -43, -33, -20, -2,
  14, 10, 8, 5, -3, -6, -8, -5, -2, -3, -4, -6, -4, -7, -8, -13, -13, -14, -16, -8, -4, -3, -3, -1,
  4, 6, 5, 5, 9, 12, 19, 26, 26, 25, 26, 23, 17, 11, 8, 5, 6, 6, 3, 0, -3, -5, -5, -6, -5, -4, -3, -3, -1,
  4, 6, 5, 5, 6, 6, 4, -2, -3, -4, -4, -4, -4, -2, -4, -5, -4, -2, -1, -2, -3, -5, -7, -5, -5, -5, -6, -5, -8, -2,
  1, 5, 8, 12, 13, 13, 16, 16, 14, 13, 10, 11, 10, 7, 4, 1, -2, -5, -6, -7, -8, -6, -5, -3, -3, -3, -4, -3, -2, -2, -1,
  5, 13, 16, 16, 20, 27, 35, 33, 30, 24, 19, 14, 9, 4, -4, -6, -6, -6, -8, -4, -3, -1, -2, -1, 0, -1, -1, -2, 2, 1, -1, -2, 0, 0, -2, -4, -3, 0, -1, -1, -1,
  11, 26, 46, 51, 57, 57, 76, 103, 99, 97
];
const dif = "15,1907 24,1899 35,1890 46,1895 56,1898 72,1899 88,1905 96,1904 106,1909 114,1912 118,1898 126,1870 131,1846 139,1817 145,1806 150,1802 158,1786 164,1763 169,1764 174,1770 181,1791 188,1805 193,1811 199,1813 205,1821 214,1831 220,1825 228,1828 234,1840 239,1854 245,1868 255,1890 265,1918 270,1921 275,1915 283,1915 292,1925 303,1940 312,1957 322,1980 330,1991 342,1990 350,1984 358,1967 370,1967 388,1976 400,1975 418,1979 432,1985 449,1992 460,1987 475,1986 490,1982 505,1974 518,1958 532,1951 550,1953 566,1953 585,1958 600,1959 616,1959 625,1955 640,1953 650,1951 665,1956 685,1957 700,1960 718,1959 738,1964 755,1965 770,1968 782,1961 795,1954 810,1947 825,1944 838,1941 853,1944 870,1950 885,1952 910,1952 928,1952 940,1941 953,1934 965,1916 978,1911 992,1912 1008,1921 1025,1925 1050,1922 1075,1921 1100,1923 1113,1925 1134,1923 1143,1908 1149,1889 1160,1870 1165,1863 1170,1843 1174,1818 1184,1797";
const dea = "14,1918 28,1908 45,1899 70,1899 95,1903 115,1908 125,1898 138,1871 150,1842 160,1818 170,1800 180,1793 195,1799 215,1814 230,1820 240,1832 255,1858 270,1885 285,1902 305,1922 320,1942 335,1965 345,1974 355,1974 370,1971 390,1972 425,1976 450,1985 470,1987 500,1982 515,1973 535,1961 555,1956 575,1954 615,1958 655,1953 700,1957 750,1962 778,1964 800,1959 840,1945 860,1945 890,1950 928,1952 953,1943 970,1929 985,1919 1000,1917 1030,1922 1080,1923 1134,1924 1150,1910 1165,1890 1175,1865 1184,1842";

function drawMacd() {
  let out = '<rect class="frame" x="12.500" y="1763" width="1174.500" height="261" />';
  macdBars.forEach((v, i) => {
    out += `<rect x="${barX(i) - 1}" y="${v > 0 ? 1937 - v : 1937}" width="3.800" height="${Math.abs(v)}" fill="${v > 0 ? RED : GREEN}" />`;
  });
  out += text(15, 1806, "9.30", 'class="axis" textLength="77"') + text(16, 2020, "-4.58", 'class="axis" textLength="97"');
  out += line(dif, "#222") + line(dea, "#e6c45c");
  document.getElementById("macd").innerHTML = out;
}

// the kdj curves are stored on a 3136 wide grid and scaled into the panel
const kLine = "38,433 50,400 62,394 77,410 90,412 103,470 115,540 128,580 140,580 154,637 181,634 194,577 232,580 246,515 259,545 271,615 285,628 298,625 312,510 330,440 350,372 362,360 376,368 390,390 402,372 415,385 429,355 442,420 455,490 468,575 481,625 494,652 507,663 520,650 534,677 547,675 560,640 573,535 586,490 600,487 612,560 625,650 638,690 651,745 664,760 677,790 690,823 703,770 716,680 729,590 742,560 755,590 768,620 782,665 808,760 834,828 847,813 860,808 873,760 900,660 912,590 925,490 938,440 951,490 964,540 977,590 990,680 1017,775 1042,745 1056,765 1069,768 1082,785 1095,777 1108,810 1122,820 1134,843 1147,800 1160,798 1173,808 1187,720 1200,697 1226,715 1239,700 1252,655 1265,645 1278,680 1291,698 1304,685 1317,610 1330,525 1343,495 1356,503 1369,520 1382,503 1396,540 1409,620 1421,690 1434,740 1448,765 1474,735 1487,785 1500,805 1513,828 1539,817 1552,822 1565,795 1578,793 1593,775 1605,777 1618,720 1631,660 1644,640 1657,677 1668,677 1683,665 1696,675 1709,735 1722,782 1758,784 1775,788 1788,805 1803,808 1814,828 1840,720 1866,640 1879,660 1905,755 1920,790 1933,775 1946,732 1963,745 1984,765 1997,755 2010,765 2023,650 2049,510 2075,415 2088,418 2101,430 2114,403 2127,407 2140,470 2153,520 2166,600 2180,583 2196,600 2218,740 2231,785 2258,830 2280,820 2297,825 2310,800 2323,790 2337,755 2363,775 2376,810 2389,770 2400,748 2415,790 2428,710 2441,590 2454,487 2467,500 2480,527 2493,490 2506,420 2517,405 2532,440 2558,510 2578,550 2598,615 2624,750 2637,768 2650,733 2663,717 2676,730 2689,620 2715,512 2728,513 2755,447 2768,480 2794,487 2807,470 2820,510 2846,568 2872,520 2898,572 2924,518 2937,565 2963,575 2977,470 2989,410 3003,383 3016,397 3042,360 3068,327 3081,360";
const dLine = "38,457 60,425 77,418 90,418 103,435 128,505 154,570 181,603 207,592 232,586 254,555 271,580 298,604 312,570 330,510 350,450 376,405 402,390 429,378 442,388 460,430 481,520 507,595 534,635 557,652 573,600 600,542 612,550 638,635 664,700 690,755 703,765 716,740 742,650 762,625 782,635 808,690 834,760 862,790 886,750 912,660 938,550 958,530 977,545 1000,630 1020,690 1050,730 1095,765 1134,812 1170,806 1200,745 1226,725 1252,690 1270,677 1304,688 1330,615 1356,553 1391,525 1409,560 1440,660 1474,715 1513,780 1552,808 1573,803 1608,788 1628,735 1646,700 1688,678 1709,700 1738,745 1775,775 1814,802 1827,795 1853,730 1873,692 1888,690 1908,720 1933,750 1968,742 2008,755 2023,720 2049,620 2075,515 2101,460 2130,430 2148,460 2168,515 2193,560 2228,680 2258,755 2284,790 2310,808 2348,780 2368,785 2378,792 2403,770 2428,765 2441,720 2458,620 2488,560 2513,480 2538,460 2558,475 2593,540 2618,630 2637,690 2676,715 2693,675 2718,595 2753,508 2808,485 2846,530 2872,525 2907,550 2924,540 2963,560 2977,530 3003,455 3042,400 3068,362 3094,360";
const jLine = "38,390 50,325 57,327 65,345 77,392 90,400 103,535 115,680 128,733 140,685 154,780 166,720 181,700 194,542 207,565 232,572 246,423 259,510 271,697 283,703 297,675 310,385 325,300 350,203 362,230 390,375 402,330 415,385 429,308 442,470 455,600 468,760 481,832 494,832 507,800 520,717 534,757 547,725 560,650 573,385 586,335 599,370 612,560 625,795 638,830 651,915 664,895 677,925 690,960 703,770 716,560 729,385 742,380 755,520 768,620 782,740 795,830 808,895 820,945 834,967 847,880 860,845 873,720 886,610 900,520 912,410 925,240 938,203 951,370 964,520 977,640 990,850 1003,925 1017,960 1029,860 1042,797 1056,820 1069,813 1082,840 1095,793 1108,880 1122,880 1134,915 1147,790 1160,777 1173,832 1187,605 1200,587 1213,640 1226,690 1239,655 1252,567 1265,570 1278,680 1291,730 1304,680 1317,500 1330,335 1343,327 1356,400 1369,487 1382,445 1396,560 1409,710 1421,860 1434,910 1448,932 1460,840 1474,770 1487,878 1500,883 1513,922 1526,865 1539,835 1552,855 1565,777 1578,776 1591,740 1605,760 1618,650 1631,515 1644,515 1657,650 1668,657 1683,628 1696,665 1709,795 1722,898 1736,855 1749,832 1762,820 1775,818 1788,848 1801,835 1814,880 1827,755 1840,625 1853,555 1866,507 1879,590 1892,700 1905,790 1918,900 1931,825 1944,700 1958,742 1971,770 1984,795 1997,745 2010,790 2023,510 2036,390 2049,285 2075,213 2088,290 2101,360 2114,318 2127,360 2140,500 2153,605 2166,778 2180,675 2193,688 2205,810 2218,935 2231,967 2245,962 2258,970 2271,910 2284,868 2297,870 2310,810 2323,775 2337,685 2350,740 2363,770 2376,862 2389,760 2402,685 2415,823 2428,700 2441,360 2454,188 2467,320 2480,447 2493,380 2506,255 2519,275 2532,400 2545,470 2558,580 2573,620 2598,740 2611,860 2624,958 2637,930 2650,785 2663,740 2676,768 2689,490 2702,405 2715,333 2728,402 2741,350 2755,317 2768,450 2781,447 2794,500 2807,440 2820,530 2833,620 2846,645 2859,545 2872,500 2885,570 2898,622 2911,560 2924,467 2937,600 2950,608 2964,600 2977,370 2989,245 3003,235 3016,320 3042,290 3055,253 3068,262 3081,350 3094,375";

const toPanel = (pts) =>
  pts.split(" ").map((p) => {
    const [x, y] = p.split(",");
    return (x * 1200 / 3136).toFixed(1) + "," + (2030 + y / 3).toFixed(1);
  }).join(" ");

function drawKdj() {
  let out = '<rect class="frame" x="12.500" y="2092.500" width="1174.500" height="261" />';
  out += '<path d="M13 2163.500H1187M13 2225.500H1187M13 2288H1187" stroke="#d4d4d4" stroke-width="1.500" stroke-dasharray="15 6" />';
  [[2162, "80"], [2225, "50"], [2287, "20"]].forEach(([y, v]) => {
    out += text(1148, y, v, 'fill="#ccc" font-size="35" textLength="37"');
  });
  out += text(16, 2135, "113.85", 'class="axis" textLength="120"') + text(16, 2349, "-11.75", 'class="axis" textLength="118"');
  out += line(toPanel(kLine), "#222") + line(toPanel(dLine), "#e6c45c") + line(toPanel(jLine), "#be42cc");
  document.getElementById("kdj").innerHTML = out;
}

drawKline();
drawMacd();
drawKdj();
```
